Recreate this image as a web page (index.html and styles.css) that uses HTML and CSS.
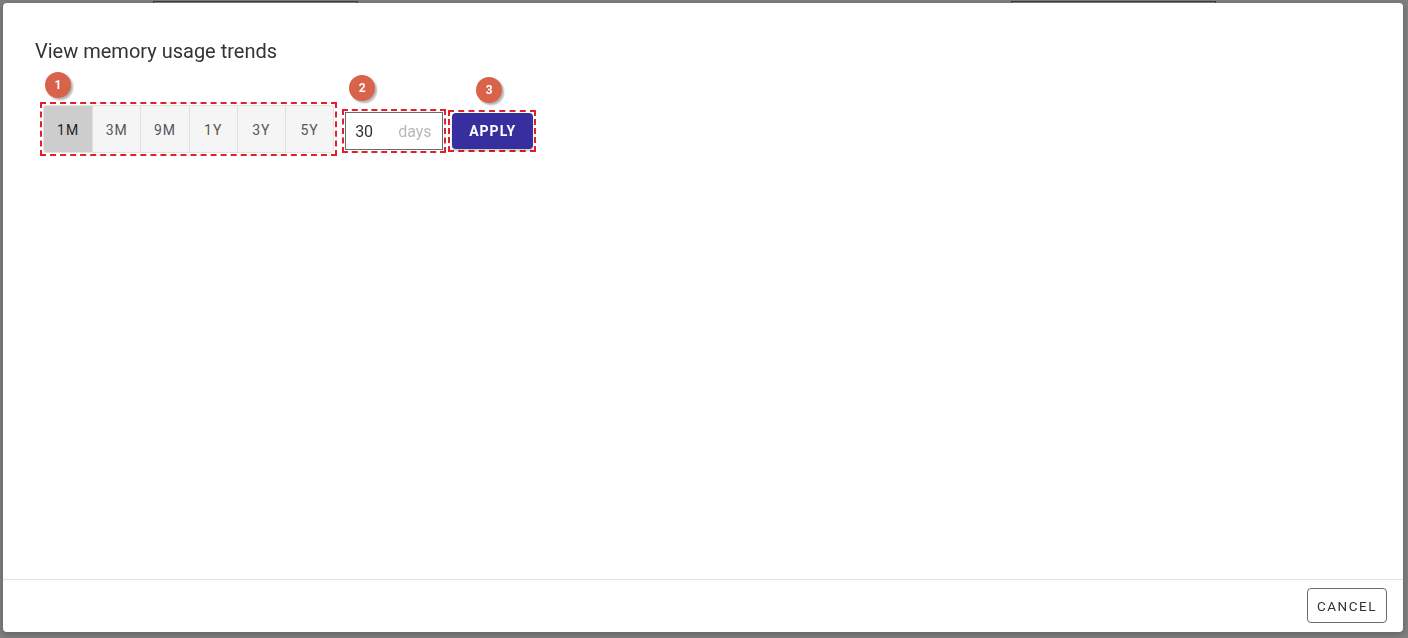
FILE: index.html
```html
<!DOCTYPE html>
<html lang="en">
<head>
    <meta charset="UTF-8">
    <meta name="viewport" content="width=device-width, initial-scale=1.0">
    <title>Memory usage trends</title>
    <link rel="stylesheet" href="styles.css">
</head>
<body>
    <!-- page behind the modal -->
    <div class="page">
        <div class="page-tab"></div>
        <div class="page-tab"></div>
    </div>
    <div class="backdrop">
        <div class="dialog">
            <div class="dialog-body">
                <h2 class="dialog-title">View memory usage trends</h2>
                <div class="controls">
                    <div class="mark mark-range">
                        <span class="badge badge-1">1</span>
                        <div class="range-group">
                            <button type="button" class="range-btn active">1M</button>
                            <button type="button" class="range-btn">3M</button>
                            <button type="button" class="range-btn">9M</button>
                            <button type="button" class="range-btn">1Y</button>
                            <button type="button" class="range-btn">3Y</button>
                            <button type="button" class="range-btn">5Y</button>
                        </div>
                    </div>
                    <div class="mark mark-days">
                        <span class="badge badge-2">2</span>
                        <label class="days-field">
                            <input type="text" value="30">
                            <span class="days-unit">days</span>
                        </label>
                    </div>
                    <div class="mark mark-apply">
                        <span class="badge badge-3">3</span>
                        <button type="button" class="apply-btn">APPLY</button>
                    </div>
                </div>
            </div>
            <div class="dialog-footer">
                <button type="button" class="cancel-btn">CANCEL</button>
            </div>
        </div>
    </div>
</body>
</html>
```

FILE: styles.css
```css
body {
    font-family: Roboto, "Liberation Sans", sans-serif;
    margin: 0;
    padding: 0;
    background-color: #7f7f7f;
    width: 1408px;
    height: 638px;
    overflow: hidden;
}
.page {
    display: flex;
    padding-left: 153px;
    gap: 653px;
}
.page-tab {
    width: 203px;
    height: 20px;
    margin-top: 1px;
    border: 1px solid #3d3d3d;
    border-bottom: none;
}
.backdrop {
    position: fixed;
    top: 0;
    left: 0;
    right: 0;
    bottom: 0;
    padding: 3px;
}
.dialog {
    width: 1400px;
    height: 629px;
    background: #fff;
    border-radius: 4px;
    box-shadow: 0 2px 6px rgba(0, 0, 0, 0.25);
    display: flex;
    flex-direction: column;
}
.dialog-body {
    flex: 1;
    padding: 36px 32px 0;
}
.dialog-title {
    margin: 0;
    font-size: 20px;
    line-height: 24px;
    font-weight: 400;
    color: #333;
}
.controls {
    display: flex;
    align-items: center;
    margin-top: 39px;
    margin-left: 5px;
}
.mark {
    position: relative;
    border: 2px dashed #e0202a;
    padding: 1px;
}
.mark-days {
    margin-left: 5px;
    margin-top: 4px;
}
.mark-apply {
    margin-left: 2px;
    margin-top: 4px;
    padding-left: 2px;
}
.badge {
    position: absolute;
    width: 26px;
    height: 26px;
    border-radius: 50%;
    background: #d9634a;
    color: #fff;
    font-size: 12px;
    font-weight: 700;
    line-height: 26px;
    text-align: center;
    box-shadow: 2px 2px 2px rgba(0, 0, 0, 0.3);
}
.badge-1 {
    left: 3px;
    top: -32px;
}
.badge-2 {
    left: 5px;
    top: -36px;
}
.badge-3 {
    left: 26px;
    top: -35px;
}
.range-group {
    display: flex;
    border: 1px solid #e3e3e3;
    border-radius: 3px;
    overflow: hidden;
}
.range-btn {
    width: 48.2px;
    height: 46px;
    border: none;
    border-left: 1px solid #e0e0e0;
    background: #f5f5f5;
    font-family: inherit;
    font-size: 14px;
    font-weight: 400;
    letter-spacing: 1px;
    color: #555;
    padding: 2px 0 0;
}
.range-btn:first-child {
    border-left: none;
}
.range-btn.active {
    background: #cdcdcd;
    color: #1f1f1f;
}
.days-field {
    display: flex;
    align-items: center;
    width: 96px;
    height: 36px;
    border: 1px solid #6b6b6b;
}
.days-field input {
    width: 43px;
    border: none;
    outline: none;
    padding: 0 0 0 9px;
    margin: 0;
    font-family: inherit;
    font-size: 16px;
    color: #333;
    background: transparent;
}
.days-unit {
    font-size: 16px;
    color: #b8b8b8;
}
.apply-btn {
    width: 81px;
    height: 36px;
    border: none;
    border-radius: 4px;
    background: #372ea0;
    color: #fff;
    font-family: inherit;
    font-size: 14px;
    font-weight: 700;
    letter-spacing: 1px;
    box-shadow: 0 2px 2px rgba(0, 0, 0, 0.2);
}
.dialog-footer {
    display: flex;
    justify-content: flex-end;
    border-top: 1px solid #e2e2e2;
    padding: 8px 16px 9px;
}
.cancel-btn {
    width: 80px;
    height: 35px;
    border: 1px solid #6b6b6b;
    border-radius: 4px;
    background: #fff;
    font-family: inherit;
    font-size: 13.5px;
    font-weight: 400;
    letter-spacing: 1.5px;
    color: #333;
    padding: 0;
}
```
